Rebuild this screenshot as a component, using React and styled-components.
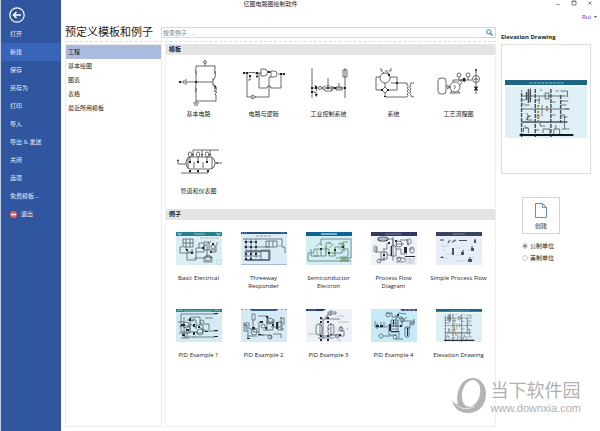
import React, { useState } from 'react'
import styled, { createGlobalStyle } from 'styled-components'

const GlobalStyle = createGlobalStyle`
  * {
    box-sizing: border-box;
  }
  body {
    margin: 0;
    background: #fff;
    color: #222;
    font-family: "Open Sans", "Noto Sans CJK SC", sans-serif;
    font-size: 6px;
    line-height: 8px;
  }
  button, input {
    font: inherit;
    color: inherit;
    margin: 0;
    padding: 0;
    border: none;
    background: none;
  }
  h1, h2, h3, p {
    margin: 0;
  }
`

const menuItems = ['打开', '新建', '保存', '另存为', '打印', '导入', '导出 & 发送', '关闭', '选项', '免费模板...']
const categories = ['工程', '基本绘图', '图表', '表格', '最近所用模板']

const templates = [
  {
    name: '基本电路',
    art: (
      <>
        <path d="M29 6V3M20 10V6H39V10M20 10l-1 1 2 1-2 1 2 1-1 1V27l-1 1 2 1-2 1 2 1-2 1 1 1V41M39 10l-1 1 2 1-2 1 2 1-1 1V18l-2 2M3 22H8M8 20V24M10 19V25M10 22H37M37 18V26M37 24l3 3M40 27l-2 1 3 1-3 2 3 1-2 2 1 1V41H20M17 43H23M18 45H22M20 41V43" />
        <circle cx="29" cy="2" r="1.4" />
        <path className="dot" d="M19 21h2v2h-2zM3 21h2v2H3zM39 25l2 3-3-1z" />
      </>
    ),
  },
  {
    name: '电路与逻辑',
    art: (
      <>
        <path d="M2 13H8l1-1 1 1 1-1 1 1 1-1 1 1H20M6 13V37H11M11 35V39L15 37ZM15 37H28V17H30M18 13V28H26a2 2 0 0 1 4 0H40V14M20 9H23a3.500 3.500 0 0 1 0 7H20ZM27 12H30M30 11H33a3 3 0 0 1 0 6H30ZM37 14H43M7 20H9V16M16 13V17M15 17H17" />
        <path className="dot" d="M2 12h2v2H2zM5 12h2v2H5zM8 15h2v2H8zM15 16h2v1h-2zM15 12h2v2h-2zM27 11h2v2h-2zM39 13h2v2h-2zM42 13h2v2h-2z" />
      </>
    ),
  },
  {
    name: '工业控制系统',
    art: (
      <>
        <path d="M6 8V38M39 8V38M37 10H41V17H37ZM6 28H12M16 28H17M20 28H39M22 18V26M20 26H24M19 30V31H26V30M33 23V27M30 27H36V30H30ZM6 32H10V36M9 25l2 6" />
        <circle cx="14" cy="28" r="1.500" />
        <circle cx="18" cy="28" r="1.500" />
        <circle cx="26" cy="28" r="1.500" />
        <path className="dot" d="M5 27h2v2H5zM9 26h2v3H9zM9 34h3l-2 3zM21 27h2v2h-2zM38 27h2v2h-2zM28 27h2v2h-2zM5 31h2v2H5z" />
      </>
    ),
  },
  {
    name: '系统',
    art: (
      <>
        <path d="M9 17H5V30H11M19 17H26V30H17M14 23V27M14 33V37H36M20 23H36V25M14 27l3 3-3 3-3-3ZM10 8V11H12M14 11H17M18 11H20V8M11 14l2-2M16 12l3 3M36 25q3 1 0 3q3 1 0 3q3 1 0 3q2 2 0 3M43 23H40q-2 1 0 3q-3 1 0 3q-3 1 0 3q-3 1 0 3q-1 2 3 2" />
        <circle cx="14" cy="18" r="5" />
        <path className="dot" d="M17 14h2v2h-2zM25 22h2v2h-2zM13 36h2v1h-2zM10 29h2v2h-2zM16 29h2v2h-2z" />
      </>
    ),
  },
  {
    name: '工艺流程图',
    art: (
      <>
        <rect x="2" y="18" width="8" height="16" rx="3" />
        <circle cx="19" cy="27" r="5" />
        <circle cx="23" cy="15" r="2" />
        <circle cx="32" cy="15" r="2" />
        <circle cx="40" cy="19" r="3.500" />
        <path d="M10 27H14M11 25l3 2-3 2M18 25q3 2 0 4M20 20H36M22 22l2-2M17 22V20H20M16 31l-2 2H24l-2-2M23 17V20M32 17V20M25 20l4-2V22l-4-2M40 10V34M38 20l2-2 1 2 1-1M38 27l4 3H38l4-3ZM24 25q2-1 1-5" />
        <path className="dot" d="M39 9l1 3 1-3zM27 18h2v3h-2zM39 27h2v3h-2z" />
      </>
    ),
  },
  {
    name: '管道和仪表图',
    art: (
      <>
        <path d="M14 20H35q4 1 4 6t-4 6H14q-4-1-4-6t4-6ZM12 20V32M36 20V32M17 13H43M17 13V20M26 13V20M34 13V20M5 36H32M14 36V33M22 36V33M32 36V33M2 23V27H10M39 26H46M14 25V21M22 25V21M31 25V21M18 25V31M27 25V31" />
        <rect x="12.500" y="15" width="3" height="5" rx="1.500" />
        <rect x="20.500" y="15" width="3" height="5" rx="1.500" />
        <rect x="29.500" y="15" width="3" height="5" rx="1.500" />
        <path className="dot" d="M1 24l1-2 1 2zM40 26l2-1v2zM13 24h2v2h-2zM21 24h2v2h-2zM30 24h2v2h-2zM13 33h2v2h-2zM21 33h2v2h-2zM31 33h2v2h-2zM16 17h2l-1 2zM25 17h2l-1 2zM33 17h2l-1 2z" />
      </>
    ),
  },
]

const ElevationDrawing = () => (
  <svg viewBox="0 0 84 58" preserveAspectRatio="none" aria-hidden="true">
    <rect width="84" height="58" fill="#deeff6" />
    <rect width="84" height="5" fill="#1c6684" />
    <path d="M25 3H60" stroke="#8db9ca" strokeDasharray="3 1" />
    <path d="M0 6H84" stroke="#fff" />
    <g fill="none" stroke="#4a535a">
      <path d="M17 16H63M17 29H66" strokeWidth=".8" />
      <path d="M17 13V57M31 9V57M47 9V57M57 15V43" strokeWidth="1.500" strokeDasharray="4 1" />
      <path d="M17 42H64" strokeWidth="1.500" />
      <path d="M15 55H70" stroke="#101820" strokeWidth="2" />
      <path d="M24 9V23M26 10V22M22 12V20" strokeWidth="1.500" />
      <path d="M41 13h4v6h-4zM57 11H64V17M57 21H65M57 25H63M57 35H61V49M59 37H64M22 33l3 4-4 3M20 25H25M27 36H23v4h5M36 42V46H41" strokeWidth=".8" />
      <path d="M19 52v-4h5v5M39 53v-4h7v5M50 54v-5h6v5M20 46l3 2M52 45v4M35 50H31" strokeWidth=".8" />
      <path d="M17 20h4M17 24h3M31 20h5M47 22h5M47 35h5M31 36h5M61 29H66M58 49H66M35 24V17M38 25V36" strokeWidth=".7" />
    </g>
    <path d="M34 25V42M43 26V32" stroke="#a28646" strokeWidth="2" strokeDasharray="2 1" fill="none" />
    <path d="M17 10V12M26 8V10M36 10H38M52 11H55" stroke="#777" />
  </svg>
)

const examples = [
  {
    name: 'Basic Electrical',
    art: (
      <>
        <rect width="46" height="33" fill="#d9eff4" />
        <rect width="46" height="4" fill="#26808c" />
        <path d="M1 1l4 2M6 1L2 3M40 1l4 2M45 1l-4 2M18 2H29" stroke="#c2e3e6" />
        <path d="M24 6H44" stroke="#b79a9a" strokeDasharray="4 1" />
        <path d="M7 7h10v8H7zM10 7V18M14 7V15M7 11H17M6 15H4v6h12V17M18 20H11v8h9V16H28M20 20h8V13h3v12h5M28 10h5v8H28zM31 12l4-3M28 25h8v5h-8zM36 20h4V13l2-3M33 18H40M23 16V11h5M18 26H28" />
        <circle cx="37" cy="15" r="2" />
        <circle cx="32" cy="26" r="3" />
        <circle cx="43" cy="30" r="2.500" stroke="#b7d6e2" />
        <path className="dot" d="M26 15h2v2h-2zM34 19h2v2h-2zM10 17h2v2h-2zM15 20h2v2h-2zM36 11h2v2h-2z" />
      </>
    ),
  },
  {
    name: 'Threeway Responder',
    art: (
      <>
        <rect width="46" height="33" fill="#d9edf7" />
        <rect width="46" height="2" fill="#29527f" />
        <path d="M1 1H6M40 1H44" stroke="#a8c8df" strokeDasharray="1 1" />
        <path d="M0 33H46" stroke="#3c638c" />
        <path d="M15 4H30" stroke="#738393" strokeDasharray="3 1" />
        <path d="M2 7H41V15H44V21M3 10H15M3 15H28M3 20H20M3 24H20M3 28H29V18H20V28M5 7V28M10 7V28M15 7V26M25 9h11v6H25zM28 9V15M32 9V15" />
        <path d="M5 19H28V28H5" stroke="#59656e" strokeWidth="1.500" />
        <path className="dot" d="M4 9h2v2H4zM9 9h2v2H9zM14 9h2v2h-2zM4 14h2v2H4zM9 14h2v2H9zM14 14h2v2h-2zM4 21h2v2H4zM9 21h2v2H9zM14 21h2v2h-2zM4 26h2v2H4zM9 26h2v2H9z" />
        <path d="M22 15h3M37 14h4" stroke="#8aac55" />
      </>
    ),
  },
  {
    name: 'Semiconductor Electron',
    art: (
      <>
        <rect width="46" height="33" fill="#d3edf4" />
        <rect width="46" height="4" fill="#0b6595" />
        <path d="M15 2H31" stroke="#f3fafc" strokeWidth="1" />
        <path d="M15 7H45V26H30M2 29H45M2 21V29M2 21H8V17H15V24M8 24H20V11H25M15 13V7M15 17H23V24H29V15H37V10H42M5 17V24H13M23 21H36V17H42V24M32 12h6v8M34 25h8v4" stroke="#48715d" />
        <path d="M10 14l4-3 2 3M22 10l5 3-4 3M34 10l3 4-4 3M11 17v6M20 14v8M29 16v7" stroke="#719b39" />
        <path d="M34 29q3-5 8 0z" fill="#a8be75" stroke="#547340" />
        <path className="dot" d="M14 16h2v2h-2zM22 20h2v2h-2zM28 17h2v2h-2zM36 14h2v2h-2z" />
      </>
    ),
  },
  {
    name: 'Process Flow Diagram',
    art: (
      <>
        <rect width="46" height="33" fill="#eef2f9" />
        <rect width="46" height="4" fill="#33395c" />
        <path d="M14 2H31" stroke="#9499ae" />
        <ellipse cx="12" cy="7" rx="5" ry="2" strokeWidth="1.200" />
        <path d="M7 7h10M17 7h5v7M22 5V29M20 14h5v10h-5zM10 20h6v7h-6zM13 17V29M16 23h4M16 11V17H12M25 12h8M25 17h5v5h6M25 26h9v4M5 15v5h5M13 28H8M29 8h8v6M38 17h4M25 30h8" />
        <circle cx="28" cy="12" r="3" />
        <circle cx="8" cy="29" r="2" />
        <circle cx="28" cy="27" r="2" />
        <rect x="3" y="14" width="3" height="6" rx="1.500" />
        <rect x="36" y="7" width="4" height="5" rx="1.500" />
        <rect x="39" y="15" width="4" height="6" rx="2" />
        <path className="dot" d="M33 15h3v6h-3zM20 14h1v10h-1zM34 24h10v1H34zM12 22h2v2h-2zM24 8h2v2h-2zM17 10h2v2h-2z" />
        <path d="M34 27H44M34 29H44M34 31H44M39 26V32" stroke="#b7bac4" />
      </>
    ),
  },
  {
    name: 'Simple Process Flow',
    art: (
      <>
        <rect width="46" height="33" fill="#e8eef7" />
        <rect width="46" height="4" fill="#3b4363" />
        <path d="M17 2H29" stroke="#9da4b9" />
        <path d="M4 8h4M12 11l2-3M16 10l4-2M39 7v2M17 16v2M27 18v2M36 14v2M34 25v2" stroke="#6f7c98" strokeWidth="1.500" />
        <path d="M5 14H12V11M9 22H17M20 23H26M31 18H37M19 16H25M6 26H12M37 24v4M8 14v5M19 29H32" stroke="#c3cbd8" />
        <path d="M38 8h2v3h-2zM16 16h2v7h-2zM25 20h3v3h-3zM35 16h3v3h-3zM32 27h4v3h-4zM4 26l2-2 2 2zM23 8h8v1h-8z" fill="#48546f" stroke="none" />
      </>
    ),
  },
  {
    name: 'PID Example 1',
    art: (
      <>
        <rect width="46" height="33" fill="#d3ebf2" />
        <rect width="46" height="3" fill="#268091" />
        <path d="M1 2l3-1 3 1M38 2l3-1 3 1M8 2H36" stroke="#bdd9de" />
        <path d="M5 5H41M5 5v18H22M8 8v20H18M3 17h11v7H3M14 10V22M14 15l7 4M18 8h6v8M11 11h9v9M20 16h7v8h-7M23 18l7 4M27 22H41M17 28H39M11 28v-5M8 13H2M5 29h8M28 15h5v6M29 9h8" />
        <circle cx="16" cy="10" r="2" />
        <circle cx="26" cy="13" r="2" />
        <circle cx="10" cy="16" r="3" />
        <circle cx="24" cy="23" r="3" />
        <path className="dot" d="M5 15h4v2H5zM10 20h3v2h-3zM6 25h3v2H6zM17 15h2v3h-2zM22 17h2v2h-2zM17 23h2v3h-2zM38 4h4v1h-4zM38 21h4v1h-4zM38 27h4v1h-4zM29 22h3v1h-3zM13 9h2v3h-2z" />
      </>
    ),
  },
  {
    name: 'PID Example 2',
    art: (
      <>
        <rect width="46" height="33" fill="#d6eaf5" />
        <path d="M8 0H38L35 2H11zM0 0h2L1 1zM4 0h2L5 1zM40 0h2l-1 1zM44 0h2l-1 1z" fill="#305d89" stroke="none" />
        <path d="M11 5h3v6h-3zM5 20v-4H3v-2h5v6h9M12 11V23h6M17 7h10v6h5v8H22M20 13h-2v13h5M26 7V22M25 14h8v-4M30 18h10V8M17 26H30v4M32 25h8v4M39 9h4v7M39 20h4M6 27h10M7 21v9" />
        <circle cx="13" cy="23" r="3" />
        <circle cx="29" cy="12" r="3" />
        <circle cx="22" cy="17" r="2" />
        <circle cx="29" cy="28" r="2" />
        <rect x="3" y="16" width="3" height="6" />
        <rect x="37" y="13" width="4" height="8" />
        <path className="dot" d="M35 13h2v7h-2zM11 18h3v2h-3zM19 12h3v2h-3zM24 18h2v2h-2zM17 25h3v1h-3zM31 15h2v2h-2zM6 29h3v1H6zM25 7h2v2h-2z" />
      </>
    ),
  },
  {
    name: 'PID Example 3',
    art: (
      <>
        <rect width="46" height="33" fill="#edf2f9" />
        <path d="M0 0H20L17 2H0z" fill="#193a77" stroke="none" />
        <path d="M2 1H10" stroke="#a7b4cf" strokeDasharray="2 1" />
        <path d="M22 5h8v-2h-8zM25 1v5h-4v4M14 10H34M17 10V29M14 14v13h11V14M20 10v-3M24 26H31M30 27h8v-5h-3v-5M22 20h2M12 29h16" />
        <rect x="10" y="15" width="6" height="11" rx="3" />
        <rect x="22" y="15" width="6" height="11" rx="3" />
        <circle cx="35" cy="20" r="2" />
        <circle cx="31" cy="27" r="2" />
        <path className="dot" d="M14 8h2v2h-2zM21 8h2v2h-2zM14 12h2v2h-2zM21 12h2v2h-2zM14 26h2v2h-2zM21 26h2v2h-2zM14 30h2v2h-2zM21 30h2v2h-2zM33 25h2v2h-2z" />
        <path d="M31 7H38M32 13H43M2 25H10M31 22H34M31 31H35M40 20H43" stroke="#a8aeba" />
      </>
    ),
  },
  {
    name: 'PID Example 4',
    art: (
      <>
        <rect width="46" height="33" fill="#c6eaf7" />
        <path d="M29 0H46V2H31z" fill="#374479" stroke="none" />
        <path d="M33 1H44" stroke="#c6cee5" strokeDasharray="3 1" />
        <path d="M15 4h6v4h10v4M24 6l5 4M27 4l8 1M25 8v10M20 11h7v12h-7zM21 14h6M21 17h6M21 20h6M16 17h15v-5h9M4 12v6h12M6 14v6M10 13v6M13 17v-4M18 18v8h8M12 27h8M28 22v7M34 19h5v-5M32 11l4-3M24 30h8M39 14h4v-4" />
        <circle cx="17" cy="6" r="2" />
        <circle cx="10" cy="27" r="2" />
        <circle cx="24" cy="28" r="2" />
        <circle cx="31" cy="11" r="2" />
        <rect x="34" y="18" width="4" height="10" rx="1" />
        <rect x="40" y="12" width="3" height="4" rx="1" />
        <path className="dot" d="M18 15h2v7h-2zM22 11h1v5h-1zM36 19h1v8h-1zM5 16h3v2H5zM9 16h3v2H9zM29 16h2v2h-2zM26 5h2v2h-2zM20 22h8v1h-8z" />
      </>
    ),
  },
  { name: 'Elevation Drawing', elevation: true },
]

export default function App() {
  const [menu, setMenu] = useState('新建')
  const [category, setCategory] = useState('工程')

  return (
    <Window>
      <GlobalStyle />
      <Sidebar>
        <BackButton aria-label="返回">
          <svg width="16" height="16" viewBox="0 0 16 16" fill="none" stroke="#fff" aria-hidden="true">
            <circle cx="8" cy="8" r="7.200" strokeWidth="1.200" />
            <path d="M12 8H4.500M7.500 5L4.500 8l3 3" strokeWidth="1.500" />
          </svg>
        </BackButton>
        {menuItems.map((item) => (
          <MenuItem key={item} $active={item === menu} onClick={() => setMenu(item)}>{item}</MenuItem>
        ))}
        <MenuItem>
          <svg width="7" height="7" viewBox="0 0 7 7" aria-hidden="true">
            <circle cx="3.500" cy="3.500" r="3.500" fill="#ee5a55" />
            <path d="M1 3.500H6" stroke="#fff" strokeWidth="1.500" />
          </svg>
          退出
        </MenuItem>
      </Sidebar>

      <Main>
        <TitleBar>
          <AppName>亿图电路图绘制软件</AppName>
          <WindowControls>
            <WindowButton aria-label="最小化">
              <svg viewBox="0 0 6 6" aria-hidden="true"><path d="M1.500 4.500h3" /></svg>
            </WindowButton>
            <WindowButton aria-label="最大化">
              <svg viewBox="0 0 6 6" aria-hidden="true"><path d="M1 1h4v4H1zM1 1.500h4" /></svg>
            </WindowButton>
            <WindowButton aria-label="关闭窗口">
              <svg viewBox="0 0 6 6" aria-hidden="true"><path d="M1.500 1.500l3 3M4.500 1.500l-3 3" /></svg>
            </WindowButton>
          </WindowControls>
        </TitleBar>
        <UserRow>
          <UserButton>
            Rui
            <svg width="3" height="2" viewBox="0 0 3 2" aria-hidden="true"><path d="M0 0h3L1.500 2z" fill="#3c5a9c" /></svg>
          </UserButton>
        </UserRow>

        <Body>
          <Browser>
            <Header>
              <Heading>预定义模板和例子</Heading>
              <SearchBox>
                <input type="text" aria-label="搜索例子" placeholder="搜索例子 . . ." />
                <SearchButton aria-label="搜索">
                  <svg width="7" height="7" viewBox="0 0 7 7" fill="none" stroke="#3479c6" aria-hidden="true">
                    <circle cx="2.800" cy="2.800" r="2.100" />
                    <path d="M4.300 4.300L6.500 6.500" strokeWidth="1.300" />
                  </svg>
                </SearchButton>
              </SearchBox>
            </Header>
            <Panels>
              <CategoryList>
                {categories.map((item) => (
                  <CategoryItem key={item} $active={item === category} onClick={() => setCategory(item)}>{item}</CategoryItem>
                ))}
              </CategoryList>
              <Content>
                <SectionTitle>模板</SectionTitle>
                <Grid>
                  {templates.map(({ name, art }) => (
                    <TemplateCard key={name}>
                      <svg viewBox="0 0 46 46" aria-hidden="true">{art}</svg>
                      <span>{name}</span>
                    </TemplateCard>
                  ))}
                </Grid>
                <SectionTitle>例子</SectionTitle>
                <Grid>
                  {examples.map(({ name, art, elevation }) => (
                    <ExampleCard key={name}>
                      {elevation ? <ElevationDrawing /> : <Schematic viewBox="0 0 46 33" aria-hidden="true">{art}</Schematic>}
                      <span>{name}</span>
                    </ExampleCard>
                  ))}
                </Grid>
              </Content>
            </Panels>
          </Browser>

          <Details>
            <DetailsTitle>Elevation Drawing</DetailsTitle>
            <Preview>
              <ElevationDrawing />
            </Preview>
            <CreateArea>
              <CreateButton>
                <svg width="12" height="15" viewBox="0 0 12 15" fill="#fff" stroke="#5b8fd0" aria-hidden="true">
                  <path d="M.5 .5H7.500L11.500 4.500V14.500H.5ZM7.500 .5V4.500H11.500" />
                </svg>
                创建
              </CreateButton>
              <UnitOption>
                <input type="radio" name="unit" defaultChecked />
                公制单位
              </UnitOption>
              <UnitOption>
                <input type="radio" name="unit" />
                美制单位
              </UnitOption>
            </CreateArea>
          </Details>
        </Body>
      </Main>

      <Watermark>
        <svg width="35" height="36" viewBox="0 0 35 36" aria-hidden="true">
          <path
            fill="#b4b4b4"
            fillRule="evenodd"
            d="M20 0C29 0 34 7 34 16C34 28 26 35 16 35C8 35 2 31 0 22C2 25 4 26 6 26C3 14 10 0 20 0ZM21 2C14 2 9 12 10 20C11 28 17 31 22 27C27 23 29 15 28 9C27 5 24 2 21 2Z"
          />
          <path d="M1 23C6 31 15 33 23 28" fill="none" stroke="#e2e2e2" />
        </svg>
        <div>
          <WatermarkName>当下软件园</WatermarkName>
          <WatermarkUrl>www.downxia.com</WatermarkUrl>
        </div>
      </Watermark>
    </Window>
  )
}

const Window = styled.div`
  position: relative;
  display: flex;
  min-height: 100vh;
`

const Sidebar = styled.nav`
  display: flex;
  flex-direction: column;
  flex: 0 0 61px;
  background: #3056a0;
  border-left: 1px solid #c3d0e8;
  color: #e6ecf8;
`

const BackButton = styled.button`
  height: 25px;
  padding: 5px 0 0 8px;
  text-align: left;
  svg {
    display: block;
  }
`

const MenuItem = styled.button`
  display: flex;
  align-items: center;
  gap: 4px;
  height: 18px;
  padding-left: 9px;
  background: ${({ $active }) => ($active ? '#3864b8' : 'transparent')};
`

const Main = styled.main`
  display: flex;
  flex-direction: column;
  flex: 1;
  min-width: 0;
  padding: 0 0 4px 4px;
`

const TitleBar = styled.header`
  display: flex;
  height: 10px;
`

const AppName = styled.h1`
  flex: 1;
  font-size: 6px;
  font-weight: 400;
  text-align: center;
`

const WindowControls = styled.div`
  display: flex;
  justify-content: flex-end;
  gap: 10px;
  width: 124px;
  padding-right: 7px;
`

const WindowButton = styled.button`
  width: 6px;
  height: 6px;
  svg {
    display: block;
    fill: none;
    stroke: #666;
    stroke-width: .8;
  }
`

const UserRow = styled.div`
  display: flex;
  justify-content: flex-end;
  height: 14px;
  padding: 3px 3px 0 0;
`

const UserButton = styled.button`
  display: flex;
  align-items: center;
  gap: 3px;
  height: 8px;
  color: #3434f0;
`

const Body = styled.div`
  display: flex;
  flex: 1;
`

const Browser = styled.section`
  display: flex;
  flex-direction: column;
  flex: 1;
  min-width: 0;
`

const Header = styled.div`
  display: flex;
  height: 18px;
  border-bottom: 1px dashed #ddd;
`

const Heading = styled.h2`
  flex: 0 0 96px;
  font-size: 11px;
  font-weight: 400;
  line-height: 16px;
  white-space: nowrap;
`

const SearchBox = styled.div`
  display: flex;
  align-items: center;
  flex: 1;
  height: 11px;
  margin-top: 3px;
  padding: 0 2px 0 1px;
  border: 1px solid #d8d8d8;
  input {
    flex: 1;
    min-width: 0;
    height: 8px;
    outline: none;
  }
  input::placeholder {
    color: #777;
    opacity: 1;
  }
`

const SearchButton = styled.button`
  width: 7px;
  height: 7px;
  svg {
    display: block;
  }
`

const Panels = styled.div`
  display: flex;
  flex: 1;
  gap: 3px;
  margin-top: 2px;
`

const CategoryList = styled.div`
  display: flex;
  flex-direction: column;
  flex: 0 0 97px;
  border: 1px solid #ebebeb;
`

const CategoryItem = styled.button`
  height: 14px;
  padding-left: 2px;
  text-align: left;
  background: ${({ $active }) => ($active ? '#abbbe0' : 'transparent')};
`

const Content = styled.div`
  flex: 1;
  min-width: 0;
  border: 1px solid #efefef;
  border-top: none;
`

const SectionTitle = styled.h3`
  height: 11px;
  padding-left: 3px;
  font-size: 6px;
  line-height: 11px;
  background: #e4e4e4;
`

const Grid = styled.div`
  display: grid;
  grid-template-columns: repeat(5, 1fr);
  grid-auto-rows: 77px;
  padding-right: 4px;
`

const Card = styled.button`
  display: flex;
  flex-direction: column;
  align-items: center;
  svg {
    flex: none;
    width: 46px;
  }
`

const TemplateCard = styled(Card)`
  gap: 4px;
  padding: 5px 4px 0;
  svg {
    height: 46px;
    fill: none;
    stroke: #444;
    stroke-width: .8;
  }
  .dot {
    fill: #222;
    stroke: none;
  }
`

const ExampleCard = styled(Card)`
  gap: 9px;
  padding: 12px 4px 0;
  svg {
    height: 33px;
  }
`

const Schematic = styled.svg`
  fill: none;
  stroke: #46525a;
  stroke-width: .7;
  rect:first-child, rect:nth-child(2) {
    stroke: none;
  }
  .dot {
    fill: #252d34;
    stroke: none;
  }
`

const Details = styled.aside`
  flex: 0 0 104px;
  padding: 9px 9px 0 5px;
`

const DetailsTitle = styled.h3`
  font-size: 6px;
  line-height: 8px;
`

const Preview = styled.div`
  display: flex;
  align-items: center;
  height: 130px;
  margin-top: 3px;
  padding: 0 3px;
  border: 1px solid #ddd;
  svg {
    width: 100%;
    height: 58px;
  }
`

const CreateArea = styled.div`
  display: flex;
  flex-direction: column;
  align-items: flex-start;
  gap: 4px;
  padding: 23px 0 0 21px;
`

const CreateButton = styled.button`
  display: flex;
  flex-direction: column;
  align-items: center;
  gap: 4px;
  width: 38px;
  height: 37px;
  margin-bottom: 4px;
  padding-top: 5px;
  border: 1px solid #d5d5d5;
`

const UnitOption = styled.label`
  display: flex;
  align-items: center;
  gap: 2px;
  height: 8px;
  input {
    appearance: none;
    width: 6px;
    height: 6px;
    border: 1px solid #ccc;
    border-radius: 50%;
  }
  input:checked {
    background: radial-gradient(#777 1px, #fff 2px);
  }
`

const Watermark = styled.div`
  position: absolute;
  right: 19px;
  bottom: 16px;
  display: flex;
  align-items: center;
  gap: 4px;
  color: #b0b0b0;
  pointer-events: none;
`

const WatermarkName = styled.p`
  font-family: "Noto Sans CJK SC", sans-serif;
  font-size: 18px;
  line-height: 26px;
`

const WatermarkUrl = styled.p`
  font-family: "Liberation Sans", sans-serif;
  font-size: 11px;
  line-height: 13px;
`
